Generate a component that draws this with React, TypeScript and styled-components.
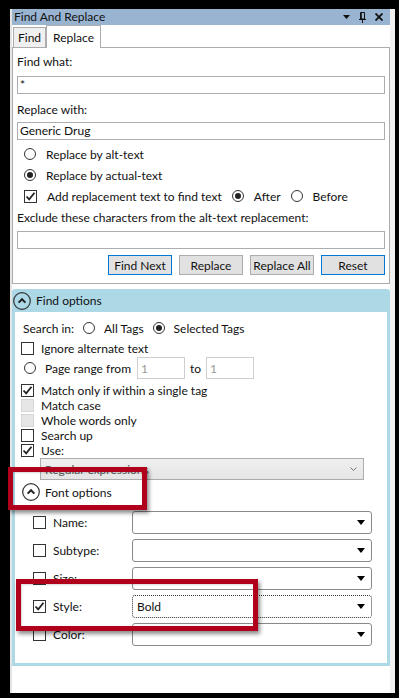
import React from 'react';
import styled, { createGlobalStyle } from 'styled-components';

const GlobalStyle = createGlobalStyle`
  html, body {
    margin: 0;
    padding: 0;
    background: #000;
  }
  body {
    font-family: Lato, 'Open Sans', sans-serif;
    font-size: 12px;
    color: #111;
  }
  #root {
    position: relative;
    width: 399px;
    height: 698px;
    overflow: hidden;
  }
`;

const Check = () => (
  <svg width="11" height="11" viewBox="0 0 11 11">
    <path d="M1.5 5.5 L4.2 8.3 L9.5 1.8" fill="none" stroke="#222" strokeWidth="1.8" />
  </svg>
);

const Chevron = ({ bg }: { bg: string }) => (
  <svg width="18" height="18" viewBox="0 0 18 18">
    <circle cx="9" cy="9" r="8.3" fill={bg} stroke="#333" strokeWidth="1.2" />
    <path d="M5.6 10.6 L9 7.2 L12.4 10.6" fill="none" stroke="#222" strokeWidth="2" />
  </svg>
);

const DownTriangle = () => (
  <svg width="8" height="5" viewBox="0 0 8 5">
    <path d="M0 0 H8 L4 5 Z" fill="#000" />
  </svg>
);

const Radio = ({ checked }: { checked?: boolean }) => <RadioCircle $checked={checked} />;

const Box = ({ checked, disabled }: { checked?: boolean; disabled?: boolean }) => (
  <CheckBox $disabled={disabled}>{checked && <Check />}</CheckBox>
);

const fontRows = [
  { label: 'Name:', value: '' },
  { label: 'Subtype:', value: '' },
  { label: 'Size:', value: '' },
  { label: 'Style:', value: 'Bold', checked: true, focused: true },
  { label: 'Color:', value: '' },
];

const App = () => {
  return (
    <>
      <GlobalStyle />
      <Window>
        <TitleBar>
          <span>Find And Replace</span>
          <TitleIcons>
            <svg width="7" height="4" viewBox="0 0 7 4">
              <path d="M0 0 H7 L3.5 4 Z" fill="#111" />
            </svg>
            <svg width="7" height="11" viewBox="0 0 7 11">
              <path d="M1.5 0.5 H5.5 V7 H1.5 Z" fill="none" stroke="#111" strokeWidth="1" />
              <path d="M2 1 V7" stroke="#111" strokeWidth="1.6" />
              <path d="M0 7.5 H7" stroke="#111" strokeWidth="1" />
              <path d="M3.5 7.5 V11" stroke="#111" strokeWidth="1" />
            </svg>
            <svg width="8" height="8" viewBox="0 0 8 8">
              <path d="M0.5 0.5 L7.5 7.5 M7.5 0.5 L0.5 7.5" stroke="#111" strokeWidth="1.8" />
            </svg>
          </TitleIcons>
        </TitleBar>

        <TabStrip>
          <Tab>Find</Tab>
          <Tab $active>Replace</Tab>
        </TabStrip>

        <Panel>
          <Label $top={6}>Find what:</Label>
          <TextInput $top={6}>*</TextInput>
          <Label $top={8}>Replace with:</Label>
          <TextInput $top={4}>Generic Drug</TextInput>
          <OptionRow $top={6}>
            <Radio />
            <span>Replace by alt-text</span>
          </OptionRow>
          <OptionRow $top={5}>
            <Radio checked />
            <span>Replace by actual-text</span>
          </OptionRow>
          <OptionRow $top={5}>
            <Box checked />
            <span>Add replacement text to find text</span>
            <Radio checked />
            <span>After</span>
            <Radio />
            <span>Before</span>
          </OptionRow>
          <Label $top={6}>Exclude these characters from the alt-text replacement:</Label>
          <TextInput $top={5} />
          <ButtonRow>
            <Button $default>Find Next</Button>
            <Button>Replace</Button>
            <Button>Replace All</Button>
            <Button $default>Reset</Button>
          </ButtonRow>
        </Panel>

        <Expander>
          <ExpanderHeader>
            <Chevron bg="#add8e6" />
            <span>Find options</span>
          </ExpanderHeader>
          <ExpanderBody>
            <SearchRow>
              <span>Search in:</span>
              <Radio />
              <span>All Tags</span>
              <Radio checked />
              <span>Selected Tags</span>
            </SearchRow>
            <CheckRow $top={5}>
              <Box />
              <span>Ignore alternate text</span>
            </CheckRow>
            <RangeRow>
              <Radio />
              <RangeLabel>Page range from</RangeLabel>
              <SmallInput>1</SmallInput>
              <ToLabel>to</ToLabel>
              <SmallInput>1</SmallInput>
            </RangeRow>
            <CheckRow $top={4}>
              <Box checked />
              <span>Match only if within a single tag</span>
            </CheckRow>
            <CheckRow>
              <Box disabled />
              <span>Match case</span>
            </CheckRow>
            <CheckRow>
              <Box disabled />
              <span>Whole words only</span>
            </CheckRow>
            <CheckRow>
              <Box />
              <span>Search up</span>
            </CheckRow>
            <CheckRow>
              <Box checked />
              <span>Use:</span>
            </CheckRow>
            <ComboBox>
              <span>Regular expressions</span>
              <svg width="7" height="4" viewBox="0 0 7 4">
                <path d="M0.5 0.5 L3.5 3.5 L6.5 0.5" fill="none" stroke="#777" strokeWidth="1" />
              </svg>
            </ComboBox>
            <FontHeader>
              <Chevron bg="#fff" />
              <span>Font options</span>
            </FontHeader>
            <FontList>
              {fontRows.map((row) => (
                <FontRow key={row.label}>
                  <Box checked={row.checked} />
                  <FontLabel>{row.label}</FontLabel>
                  <DropDown $focused={row.focused}>
                    <span>{row.value}</span>
                    <DownTriangle />
                  </DropDown>
                </FontRow>
              ))}
            </FontList>
          </ExpanderBody>
        </Expander>
      </Window>

      <Highlight style={{ left: 8, top: 467, width: 139, height: 43 }} />
      <Highlight style={{ left: 16, top: 579, width: 242, height: 52 }} />
    </>
  );
};

export default App;

const Window = styled.div`
  margin: 9px 4px 5px 10px;
  width: 385px;
  height: 684px;
  box-sizing: border-box;
  background: #fff;
  border-left: 2px solid #e4e4e4;
  border-right: 5px solid #f0f0f0;
  display: flex;
  flex-direction: column;
`;

const TitleBar = styled.div`
  height: 16px;
  flex: none;
  display: flex;
  align-items: center;
  padding: 0 7px 0 2px;
  background: #99b4d1;
  line-height: 16px;
`;

const TitleIcons = styled.div`
  margin-left: auto;
  display: flex;
  align-items: center;
  gap: 9px;
`;

const TabStrip = styled.div`
  height: 22px;
  flex: none;
  display: flex;
  align-items: flex-end;
  padding-left: 1px;
`;

const Tab = styled.div<{ $active?: boolean }>`
  box-sizing: border-box;
  height: ${({ $active }) => ($active ? 23 : 20)}px;
  margin-bottom: ${({ $active }) => ($active ? -1 : 0)}px;
  padding: 0 ${({ $active }) => ($active ? 6 : 4)}px;
  display: flex;
  align-items: center;
  background: ${({ $active }) => ($active ? '#fff' : '#f0f0f0')};
  border: 1px solid #acacac;
  border-bottom: none;
  position: relative;
  z-index: 1;
`;

const Panel = styled.div`
  flex: none;
  display: flex;
  flex-direction: column;
  border: 1px solid #acacac;
  padding: 0 4px 8px 4px;
`;

const Label = styled.div<{ $top: number }>`
  line-height: 16px;
  margin-top: ${({ $top }) => $top}px;
  white-space: nowrap;
`;

const TextInput = styled.div<{ $top: number }>`
  height: 18px;
  box-sizing: border-box;
  margin-top: ${({ $top }) => $top}px;
  border: 1px solid #abadb3;
  padding-left: 2px;
  line-height: 16px;
  display: flex;
  align-items: center;
`;

const OptionRow = styled.div<{ $top: number }>`
  height: 16px;
  display: flex;
  align-items: center;
  margin-top: ${({ $top }) => $top}px;
  padding-left: 1px;
  white-space: nowrap;

  & > span {
    margin-left: 6px;
    margin-right: 4px;
  }
`;

const RadioCircle = styled.span<{ $checked?: boolean }>`
  width: 12px;
  height: 12px;
  flex: none;
  box-sizing: border-box;
  border: 1px solid #333;
  border-radius: 50%;
  background: #fff;
  display: inline-flex;
  align-items: center;
  justify-content: center;

  &::after {
    content: '';
    width: 6px;
    height: 6px;
    border-radius: 50%;
    background: ${({ $checked }) => ($checked ? '#222' : 'transparent')};
  }
`;

const CheckBox = styled.span<{ $disabled?: boolean }>`
  width: 13px;
  height: 13px;
  flex: none;
  box-sizing: border-box;
  border: 1px solid ${({ $disabled }) => ($disabled ? '#d6d6d6' : '#333')};
  background: ${({ $disabled }) => ($disabled ? '#e6e6e6' : '#fff')};
  display: inline-flex;
  align-items: center;
  justify-content: center;
`;

const ButtonRow = styled.div`
  display: flex;
  justify-content: flex-end;
  gap: 7px;
  margin-top: 6px;
`;

const Button = styled.div<{ $default?: boolean }>`
  width: 64px;
  height: 20px;
  box-sizing: border-box;
  background: #e1e1e1;
  border: 1px solid ${({ $default }) => ($default ? '#0078d7' : '#adadad')};
  display: flex;
  align-items: center;
  justify-content: center;
  white-space: nowrap;
`;

const Expander = styled.div`
  flex: none;
  margin-top: 5px;
  display: flex;
  flex-direction: column;
  background: #add8e6;
  border-radius: 3px 3px 0 0;
`;

const ExpanderHeader = styled.div`
  height: 23px;
  display: flex;
  align-items: center;
  gap: 5px;
  padding-left: 1px;
`;

const ExpanderBody = styled.div`
  margin: 0 3px 3px;
  background: #fff;
  padding: 8px 0 17px 6px;
  display: flex;
  flex-direction: column;
`;

const SearchRow = styled.div`
  height: 16px;
  display: flex;
  align-items: center;
  white-space: nowrap;

  & > span:first-child {
    margin-left: 2px;
    margin-right: 4px;
  }
  & > span + span {
    margin-left: 5px;
    margin-right: 4px;
  }
`;

const CheckRow = styled.div<{ $top?: number }>`
  height: 15px;
  display: flex;
  align-items: center;
  margin-top: ${({ $top }) => $top || 0}px;
  white-space: nowrap;

  & > span:last-child {
    margin-left: 7px;
  }
`;

const RangeRow = styled.div`
  height: 22px;
  margin-top: 1px;
  display: flex;
  align-items: center;
  padding-left: 3px;
  white-space: nowrap;
`;

const RangeLabel = styled.span`
  margin-left: 9px;
  margin-right: 6px;
`;

const ToLabel = styled.span`
  margin: 0 5px;
`;

const SmallInput = styled.div`
  width: 48px;
  height: 22px;
  box-sizing: border-box;
  border: 1px solid #cfcfcf;
  color: #9a9a9a;
  padding-left: 3px;
  display: flex;
  align-items: center;
`;

const ComboBox = styled.div`
  margin-left: 19px;
  width: 324px;
  height: 22px;
  box-sizing: border-box;
  border: 1px solid #acacac;
  background: linear-gradient(#efefef, #e5e5e5);
  color: #555;
  padding: 0 6px 0 4px;
  display: flex;
  align-items: center;
  justify-content: space-between;
`;

const FontHeader = styled.div`
  height: 18px;
  margin-top: 3px;
  display: flex;
  align-items: center;
  gap: 5px;
  padding-left: 1px;
`;

const FontList = styled.div`
  margin-top: 10px;
  display: flex;
  flex-direction: column;
  gap: 5px;
`;

const FontRow = styled.div`
  height: 23px;
  display: flex;
  align-items: center;
  padding-left: 12px;
`;

const FontLabel = styled.span`
  width: 79px;
  margin-left: 7px;
`;

const DropDown = styled.div<{ $focused?: boolean }>`
  width: 240px;
  height: 23px;
  box-sizing: border-box;
  border: 1px ${({ $focused }) => ($focused ? 'dotted #333' : 'solid #8a8a8a')};
  border-radius: 3px;
  background: #fff;
  padding: 0 6px 0 4px;
  display: flex;
  align-items: center;
  justify-content: space-between;
`;

const Highlight = styled.div`
  position: absolute;
  box-sizing: border-box;
  border: 5px solid #b0001c;
  box-shadow: 2px 3px 4px rgba(0, 0, 0, 0.45), inset 1px 1px 2px rgba(0, 0, 0, 0.15);
  pointer-events: none;
`;
